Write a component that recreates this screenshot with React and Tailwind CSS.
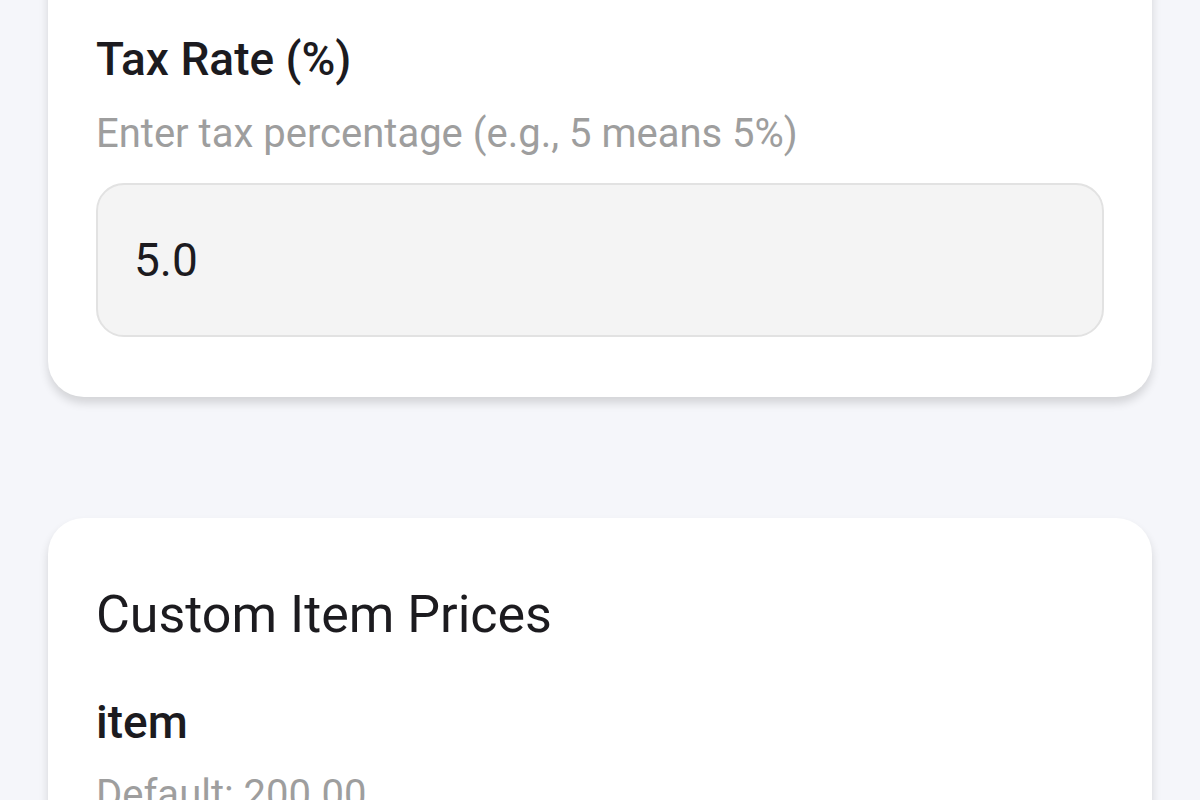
export default function App() {
  return (
    <div
      className="min-h-screen overflow-hidden bg-[#f5f6fa] px-[48px] text-[#1c1b1f]"
      style={{ fontFamily: 'Roboto, "Noto Sans", sans-serif' }}
    >
      <section className="-mt-[48px] rounded-[36px] bg-white px-[48px] pb-[60px] pt-[80px] shadow-[0_6px_10px_rgba(0,0,0,0.14)]">
        <h2 className="text-[46px] font-medium leading-[54px]">Tax Rate (%)</h2>
        <p className="mt-[24px] text-[40px] leading-[48px] text-[#9e9e9e]">
          Enter tax percentage (e.g., 5 means 5%)
        </p>
        <div className="mt-[25px] flex h-[154px] items-center rounded-[28px] border-2 border-[#e2e2e2] bg-[#f4f4f4] px-[36px]">
          <span className="text-[46px] leading-[54px]">5.0</span>
        </div>
      </section>

      <section className="mt-[121px] rounded-[36px] bg-white px-[48px] pt-[66px] pb-[48px] shadow-[0_6px_10px_rgba(0,0,0,0.14)]">
        <h2 className="text-[52px] leading-[62px]">Custom Item Prices</h2>
        <div className="mt-[49px]">
          <h3 className="text-[46px] font-medium leading-[54px]">item</h3>
          <p className="mt-[22px] text-[40px] leading-[48px] text-[#9e9e9e]">Default: 200.00</p>
        </div>
      </section>
    </div>
  )
}
